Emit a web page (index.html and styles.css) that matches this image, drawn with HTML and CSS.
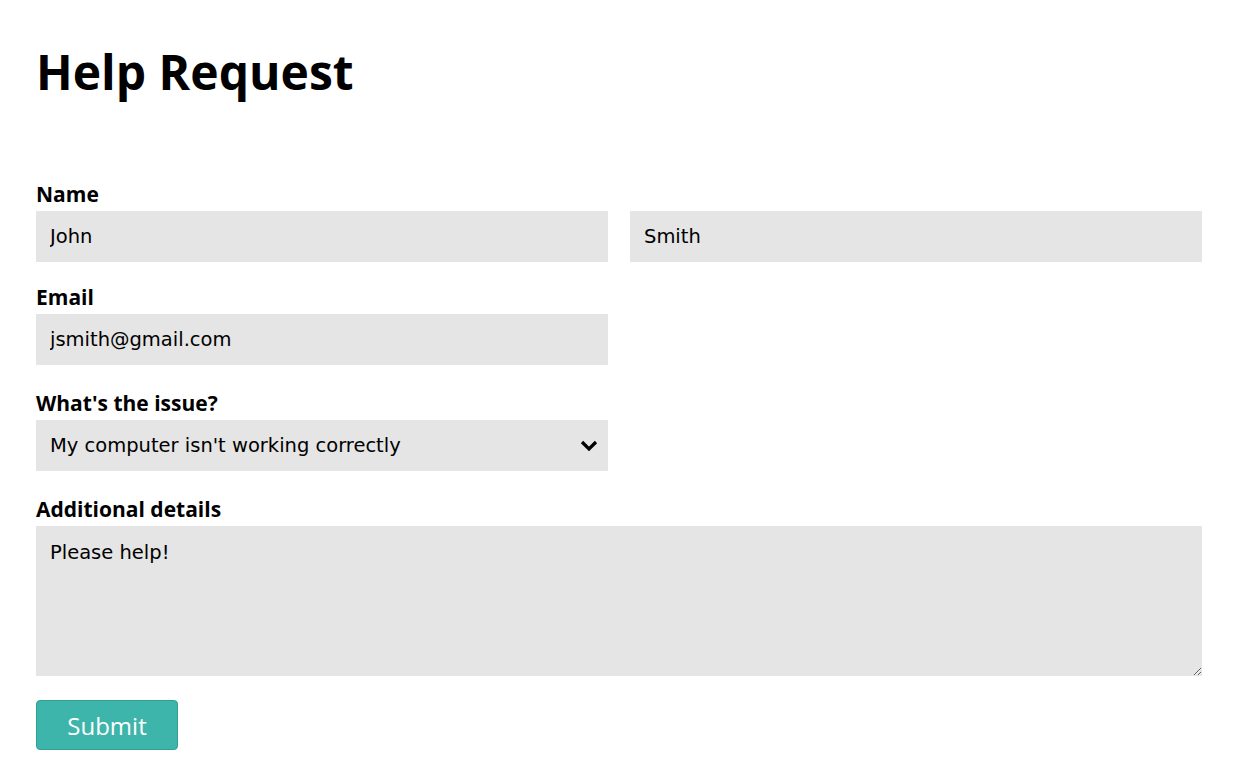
FILE: index.html
```html
<!DOCTYPE html>
<html lang="en">

<head>
    <link rel="stylesheet" href="styles.css">
</head>

<body>

    <div id="page">
        <h1 id="title">Help Request</h1>
        <form id="help-form">
            <div class="field first-field">
                <label class="field-label" for="first-name">Name</label>
                <div class="name-row">
                    <input id="first-name" class="text-input" type="text" value="John">
                    <input id="last-name" class="text-input" type="text" value="Smith">
                </div>
            </div>
            <div class="field">
                <label class="field-label" for="email">Email</label>
                <div class="half">
                    <input id="email" class="text-input" type="email" value="jsmith@gmail.com">
                </div>
            </div>
            <div class="field">
                <label class="field-label" for="issue">What's the issue?</label>
                <div class="half select-wrap">
                    <select id="issue" class="text-input">
                        <option>My computer isn't working correctly</option>
                        <option>I forgot my password</option>
                        <option>Something else</option>
                    </select>
                    <svg class="chevron" width="18" height="12" viewBox="0 0 18 12">
                        <polyline points="2,2 9,9 16,2" fill="none" stroke="#000" stroke-width="3.2" />
                    </svg>
                </div>
            </div>
            <div class="field">
                <label class="field-label" for="details">Additional details</label>
                <textarea id="details" class="text-input">Please help!</textarea>
            </div>
            <button id="submit-btn" type="button">Submit</button>
        </form>
    </div>
    <script>
        const details = document.getElementById("details");
        details.focus();
        details.setSelectionRange(details.value.length, details.value.length);
    </script>
</body>

</html>
```

FILE: styles.css
```css
body {
    margin: 0;
    background-color: white;
    font-family: "Open Sans", sans-serif;
    color: black;
}

#page {
    padding: 39px 33px 20px 36px;
}

#title {
    margin: 0;
    font-size: 48px;
    font-weight: bold;
}

#help-form {
    display: flex;
    flex-direction: column;
    margin-top: 76px;
}

.field {
    display: flex;
    flex-direction: column;
    margin-top: 24px;
}

.first-field {
    margin-top: 0;
}

.field + .field:nth-child(2) {
    margin-top: 21px;
}

.field-label {
    font-size: 21px;
    line-height: 27px;
    font-weight: bold;
    padding-top: 1px;
    margin-bottom: 3px;
}

.name-row {
    display: flex;
    gap: 22px;
}

.name-row .text-input {
    flex: 1;
    min-width: 0;
}

.half {
    width: calc(50% - 11px);
    display: flex;
}

.half .text-input {
    flex: 1;
}

.text-input {
    box-sizing: border-box;
    height: 51px;
    border: none;
    border-radius: 0;
    background-color: #e5e5e5;
    padding: 0 14px;
    font-family: "DejaVu Sans", sans-serif;
    font-size: 19.5px;
    color: black;
    outline: none;
}

.select-wrap {
    position: relative;
}

select.text-input {
    appearance: none;
    -webkit-appearance: none;
    cursor: pointer;
}

.chevron {
    position: absolute;
    right: 10px;
    top: 20px;
    pointer-events: none;
}

textarea.text-input {
    height: 150px;
    padding: 14px 14px 12px 14px;
    line-height: 26px;
    resize: vertical;
}

#submit-btn {
    align-self: flex-start;
    margin-top: 24px;
    height: 50px;
    width: 142px;
    border: 1px solid #2fa096;
    border-radius: 4px;
    background-color: #3db5aa;
    color: white;
    font-family: "Open Sans", sans-serif;
    font-size: 24px;
    cursor: pointer;
}
```
